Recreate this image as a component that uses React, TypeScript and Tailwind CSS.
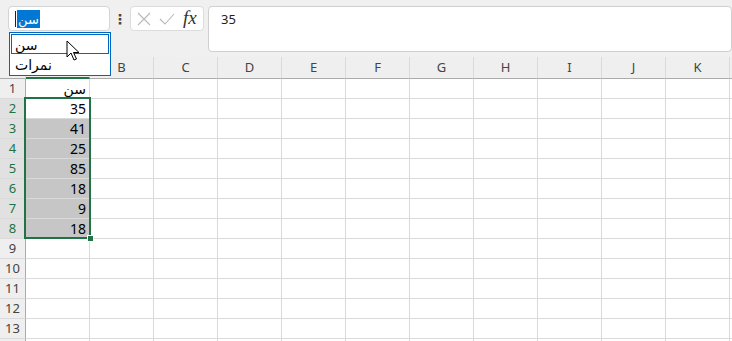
import React from "react";

const cols = ["A", "B", "C", "D", "E", "F", "G", "H", "I", "J", "K", "L"];
const data: Record<number, string> = { 1: "سن", 2: "35", 3: "41", 4: "25", 5: "85", 6: "18", 7: "9", 8: "18" };
const rows = Array.from({ length: 14 }, (_, i) => i + 1);

export default function App() {
  return (
    <div className="relative w-[732px] h-[341px] overflow-hidden bg-[#f0f0f0]" style={{ fontFamily: '"Noto Sans", "DejaVu Sans", sans-serif' }}>
      {/* toolbar */}
      <div className="h-[57px] flex items-start pt-[6px] pl-[8px] gap-0">
        <div className="w-[102px] h-[25px] bg-white border border-[#d4d4d4] rounded-[4px] flex items-center pl-[6px]">
          <div className="w-[1px] h-[16px] bg-[#222]"></div>
          <div className="h-[18px] bg-[#0078d4] text-white text-[13px] leading-[18px] ml-[1px] px-[1px]" dir="rtl">سن</div>
        </div>
        <div className="w-[20px] h-[25px] flex items-center justify-center text-[#444] text-[14px] font-bold">⋮</div>
        <div className="w-[74px] h-[25px] bg-white border border-[#dcdcdc] rounded-[4px] flex items-center pl-[6px] gap-[8px]">
          <svg width="14" height="14" viewBox="0 0 14 14"><path d="M1 1 L13 13 M13 1 L1 13" stroke="#b8b8b8" strokeWidth="1.1" fill="none" /></svg>
          <svg width="16" height="14" viewBox="0 0 16 14"><path d="M1 7 L6 12 L15 2" stroke="#b8b8b8" strokeWidth="1.1" fill="none" /></svg>
          <span className="text-[19px] italic text-[#333] leading-none -mt-[2px]" style={{ fontFamily: '"Liberation Serif", serif' }}>fx</span>
        </div>
        <div className="ml-[4px] flex-1 h-[46px] bg-white border border-[#cfcfcf] rounded-[4px] pl-[12px] pt-[3px] text-[13px] text-[#222]">35</div>
      </div>
      {/* grid */}
      <div className="flex h-[22px] bg-[#efefef]">
        <div className="w-[26px] shrink-0 border-r border-[#dadada] border-b border-b-[#ababab]"></div>
        {cols.map((c) => (
          <div key={c} className={`w-[64px] shrink-0 border-r border-[#dadada] border-b text-[13px] text-[#444] flex items-center justify-center ${c === "A" ? "border-b-2 border-b-[#217346] text-[#217346]" : "border-b-[#ababab]"}`}>{c === "L" ? "" : c}</div>
        ))}
      </div>
      {rows.map((r) => {
        const sel = r >= 2 && r <= 8;
        return (
          <div key={r} className="flex h-[20px]">
            <div className={`w-[26px] shrink-0 border-r border-r-[#ababab] border-b border-b-[#dadada] text-[13px] flex items-center justify-center ${sel ? "bg-[#e1e1e1] text-[#217346]" : "bg-[#efefef] text-[#444]"}`}>{r === 14 ? "" : r}</div>
            {cols.map((c) => {
              const v = c === "A" ? data[r] : undefined;
              const gray = c === "A" && r >= 3 && r <= 8;
              return (
                <div key={c} className={`w-[64px] shrink-0 border-r border-b border-[#dadada] text-[14px] text-black flex items-center justify-end pr-[3px] ${gray ? "bg-[#c6c6c6] border-[#b4b4b4]" : "bg-white"}`}>{v}</div>
              );
            })}
          </div>
        );
      })}
      {/* selection border */}
      <div className="absolute left-[24px] top-[97px] w-[67px] h-[142px] border-2 border-[#217346] pointer-events-none"></div>
      <div className="absolute left-[87px] top-[235px] w-[7px] h-[7px] bg-[#217346] border border-white"></div>
      {/* dropdown */}
      <div className="absolute left-[9px] top-[32px] w-[102px] h-[44px] bg-white border border-[#0067c0] p-[1px]">
        <div className="h-[20px] border-[1.5px] border-[#0067c0] flex items-center pl-[3px] text-[14px] text-black">سن</div>
        <div className="h-[21px] flex items-center pl-[4px] text-[14px] text-black">نمرات</div>
      </div>
      {/* cursor */}
      <svg className="absolute left-[66px] top-[40px]" width="14" height="22" viewBox="0 0 14 22">
        <path d="M1 1 L1 17 L5 13 L8 20 L10.5 19 L7.5 12.5 L13 12.5 Z" fill="white" stroke="black" strokeWidth="1" strokeLinejoin="round" />
      </svg>
    </div>
  );
}
